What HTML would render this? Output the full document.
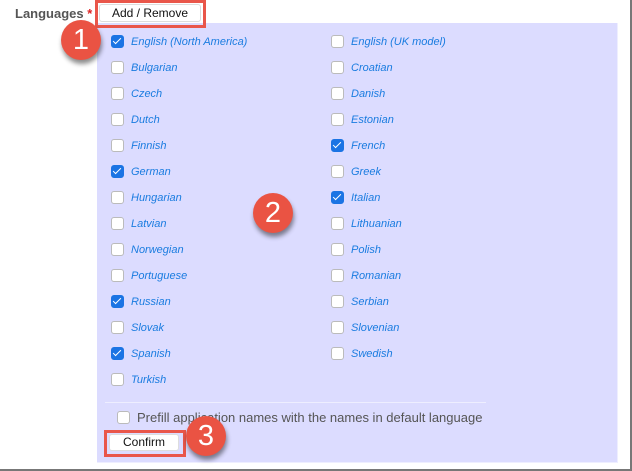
<!DOCTYPE html>
<html><head><style>
body{margin:0;width:632px;height:471px;background:#fff;font-family:"Liberation Sans",Arial,sans-serif;position:relative;overflow:hidden}
.frame{position:absolute;left:0;top:0;width:630px;height:469px;border-right:2px solid #777;border-bottom:2px solid #777}
.lbl{position:absolute;left:15px;top:6px;font-size:13px;font-weight:bold;color:#555}
.lbl span{color:#d22}
.panel{position:absolute;left:97px;top:23px;width:520px;height:439px;background:#dcdcff;border-right:1px solid #eef;border-bottom:1px solid #eef}
.btn{position:absolute;background:#fff;border-radius:3px;border:1px solid #ddd;font-size:12px;color:#111;text-align:center}
.red{position:absolute;border:3px solid #e9564a}
.row{position:absolute;font-size:11px;font-style:italic;color:#1a7ce0;height:14px;line-height:14px}
.cb{position:absolute;width:11px;height:11px;border:1px solid #bbb;border-radius:3px;background:#fff;top:0}
.cb.on{background:#1b74e4;border-color:#1b74e4}
.cb.on:after{content:"";position:absolute;left:3px;top:0px;width:3px;height:7px;border:solid #fff;border-width:0 1.6px 1.6px 0;transform:rotate(45deg)}
.row .t{position:absolute;left:20px;white-space:nowrap}
.circ{position:absolute;width:40px;height:40px;border-radius:50%;background:#ea5343;color:#fff;font-size:29px;text-align:center;line-height:40px;box-shadow:1px 4px 5px rgba(0,0,0,.45)}
.hr{position:absolute;left:105px;top:402px;width:381px;height:1px;background:#eef}
.pf{position:absolute;left:137px;top:410px;font-size:13px;color:#555}
</style></head><body>
<div class="frame"></div>
<div class="lbl">Languages <span>*</span></div>
<div class="panel"></div>
<div class="btn" style="left:99px;top:4px;width:100px;height:16px;line-height:16px">Add / Remove</div>
<div class="red" style="left:95px;top:0;width:105px;height:22px"></div>

<div class="row" style="left:111px;top:35px"><div class="cb on"></div><div class="t">English (North America)</div></div>
<div class="row" style="left:111px;top:61px"><div class="cb"></div><div class="t">Bulgarian</div></div>
<div class="row" style="left:111px;top:87px"><div class="cb"></div><div class="t">Czech</div></div>
<div class="row" style="left:111px;top:113px"><div class="cb"></div><div class="t">Dutch</div></div>
<div class="row" style="left:111px;top:139px"><div class="cb"></div><div class="t">Finnish</div></div>
<div class="row" style="left:111px;top:165px"><div class="cb on"></div><div class="t">German</div></div>
<div class="row" style="left:111px;top:191px"><div class="cb"></div><div class="t">Hungarian</div></div>
<div class="row" style="left:111px;top:217px"><div class="cb"></div><div class="t">Latvian</div></div>
<div class="row" style="left:111px;top:243px"><div class="cb"></div><div class="t">Norwegian</div></div>
<div class="row" style="left:111px;top:269px"><div class="cb"></div><div class="t">Portuguese</div></div>
<div class="row" style="left:111px;top:295px"><div class="cb on"></div><div class="t">Russian</div></div>
<div class="row" style="left:111px;top:321px"><div class="cb"></div><div class="t">Slovak</div></div>
<div class="row" style="left:111px;top:347px"><div class="cb on"></div><div class="t">Spanish</div></div>
<div class="row" style="left:111px;top:373px"><div class="cb"></div><div class="t">Turkish</div></div>

<div class="row" style="left:331px;top:35px"><div class="cb"></div><div class="t">English (UK model)</div></div>
<div class="row" style="left:331px;top:61px"><div class="cb"></div><div class="t">Croatian</div></div>
<div class="row" style="left:331px;top:87px"><div class="cb"></div><div class="t">Danish</div></div>
<div class="row" style="left:331px;top:113px"><div class="cb"></div><div class="t">Estonian</div></div>
<div class="row" style="left:331px;top:139px"><div class="cb on"></div><div class="t">French</div></div>
<div class="row" style="left:331px;top:165px"><div class="cb"></div><div class="t">Greek</div></div>
<div class="row" style="left:331px;top:191px"><div class="cb on"></div><div class="t">Italian</div></div>
<div class="row" style="left:331px;top:217px"><div class="cb"></div><div class="t">Lithuanian</div></div>
<div class="row" style="left:331px;top:243px"><div class="cb"></div><div class="t">Polish</div></div>
<div class="row" style="left:331px;top:269px"><div class="cb"></div><div class="t">Romanian</div></div>
<div class="row" style="left:331px;top:295px"><div class="cb"></div><div class="t">Serbian</div></div>
<div class="row" style="left:331px;top:321px"><div class="cb"></div><div class="t">Slovenian</div></div>
<div class="row" style="left:331px;top:347px"><div class="cb"></div><div class="t">Swedish</div></div>

<div class="hr"></div>
<div class="row" style="left:117px;top:411px"><div class="cb"></div></div>
<div class="pf">Prefill application names with the names in default language</div>
<div class="btn" style="left:109px;top:434px;width:68px;height:15px;line-height:15px">Confirm</div>
<div class="red" style="left:104px;top:430px;width:76px;height:21px"></div>

<div class="circ" style="left:61px;top:20px">1</div>
<div class="circ" style="left:253px;top:193px">2</div>
<div class="circ" style="left:186px;top:416px">3</div>
</body></html>
